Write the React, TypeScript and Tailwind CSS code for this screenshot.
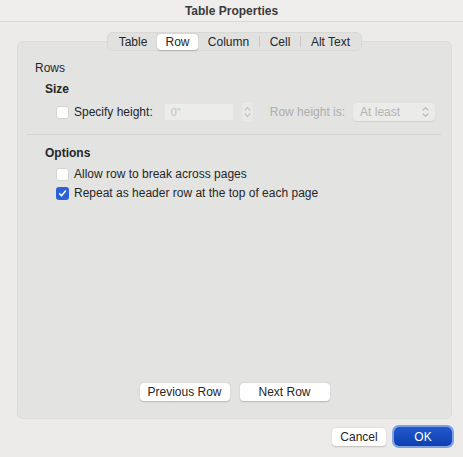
import React from 'react';

const tabs = [
  { label: 'Table', w: 'w-[48px]' },
  { label: 'Row', w: 'w-[41px]' },
  { label: 'Column', w: 'w-[61px]' },
  { label: 'Cell', w: 'w-[40px]' },
  { label: 'Alt Text', w: 'w-[59px]' },
];

const Checkbox = ({ checked }: { checked?: boolean }) =>
  checked ? (
    <span className="w-[13px] h-[13px] rounded-[3px] bg-[#2c62d6] flex items-center justify-center shrink-0">
      <svg width="9" height="9" viewBox="0 0 10 10" fill="none">
        <path d="M1.8 5.3 L4 7.6 L8.3 2.2" stroke="white" strokeWidth="1.7" strokeLinecap="round" strokeLinejoin="round" />
      </svg>
    </span>
  ) : (
    <span className="w-[13px] h-[13px] rounded-[3px] bg-white border border-[#d4d4d3] shrink-0" />
  );

const UpDown = ({ color = '#b9b9b9' }: { color?: string }) => (
  <svg width="7" height="12" viewBox="0 0 7 12" fill="none">
    <path d="M1 4.2 L3.5 1.6 L6 4.2" stroke={color} strokeWidth="1.1" strokeLinecap="round" strokeLinejoin="round" />
    <path d="M1 7.8 L3.5 10.4 L6 7.8" stroke={color} strokeWidth="1.1" strokeLinecap="round" strokeLinejoin="round" />
  </svg>
);

export default function App() {
  return (
    <div className="w-[463px] h-[457px] bg-[#ecebea] flex flex-col font-['Liberation_Sans',Arial,sans-serif] text-[12px] text-[#262626] whitespace-nowrap overflow-hidden">
      {/* title bar */}
      <div className="h-[22px] shrink-0 flex items-center justify-center font-bold text-[12px] text-[#3a3a3a] border-b border-[#d6d6d5] bg-[#efeeed]">
        Table Properties
      </div>

      <div className="flex-1 flex flex-col pl-[17px] pr-[11px] pt-[10px]">
        {/* segmented tabs */}
        <div className="flex justify-center relative z-10">
          <div className="h-[19px] flex items-center px-[1px] rounded-[6px] bg-[#e1e1e0] border border-[#d8d8d7]">
            {tabs.map((t, i) => (
              <React.Fragment key={t.label}>
                {i > 2 && <span className="w-px h-[11px] bg-[#cacac9]" />}
                <div
                  className={`${t.w} h-[16px] flex items-center justify-center rounded-[4px] ${
                    t.label === 'Row' ? 'bg-white shadow-[0_0.5px_1.5px_rgba(0,0,0,0.2)]' : ''
                  }`}
                >
                  {t.label}
                </div>
              </React.Fragment>
            ))}
          </div>
        </div>

        {/* group panel */}
        <div className="-mt-[10px] h-[378px] flex flex-col bg-[#e3e3e2] rounded-[6px] border border-[#dcdcdb] pt-[17px] pb-[17px]">
          <div className="h-[18px] flex items-center pl-[17px]">Rows</div>
          <div className="h-[18px] mt-[3px] flex items-center pl-[27px] font-bold">Size</div>

          <div className="h-[20px] mt-[4px] flex items-center pl-[38px]">
            <Checkbox />
            <span className="ml-[5px]">Specify height:</span>
            <div className="ml-[12px] w-[68px] h-[16px] bg-[#ececeb] flex items-center pl-[6px] text-[#c4c4c4] text-[11px]">
              0"
            </div>
            <div className="ml-[9px] w-[11px] h-[18px] rounded-[3px] bg-[#e9e9e8] flex items-center justify-center">
              <UpDown color="#bdbdbd" />
            </div>
            <span className="ml-[17px] text-[#adadad]">Row height is:</span>
            <div className="ml-[8px] w-[82px] h-[18px] rounded-[4px] bg-[#ebebea] shadow-[0_0.5px_1px_rgba(0,0,0,0.08)] flex items-center justify-between pl-[7px] pr-[6px] text-[#b3b3b3]">
              <span>At least</span>
              <UpDown color="#b5b5b5" />
            </div>
          </div>

          <div className="mt-[12px] ml-[9px] mr-[10px] h-px bg-[#d3d3d2]" />

          <div className="h-[18px] mt-[9px] flex items-center pl-[27px] font-bold">Options</div>
          <div className="h-[18px] mt-[3px] flex items-center pl-[38px]">
            <Checkbox />
            <span className="ml-[5px]">Allow row to break across pages</span>
          </div>
          <div className="h-[18px] mt-[1px] flex items-center pl-[38px]">
            <Checkbox checked />
            <span className="ml-[5px]">Repeat as header row at the top of each page</span>
          </div>

          <div className="flex-1" />

          <div className="flex justify-center gap-[10px]">
            <button className="w-[90px] h-[18px] rounded-[4px] bg-white shadow-[0_0.5px_1.5px_rgba(0,0,0,0.2)] flex items-center justify-center">
              Previous Row
            </button>
            <button className="w-[90px] h-[18px] rounded-[4px] bg-white shadow-[0_0.5px_1.5px_rgba(0,0,0,0.2)] flex items-center justify-center">
              Next Row
            </button>
          </div>
        </div>

        {/* dialog buttons */}
        <div className="flex justify-end items-center gap-[8px] mt-[8px]">
          <button className="w-[54px] h-[18px] rounded-[4px] bg-white shadow-[0_0.5px_1.5px_rgba(0,0,0,0.2)] flex items-center justify-center">
            Cancel
          </button>
          <button className="w-[58px] h-[19px] rounded-[5px] bg-gradient-to-b from-[#2159cf] to-[#0e3fae] text-white ring-[2px] ring-[#7ea1e6] flex items-center justify-center">
            OK
          </button>
        </div>
      </div>
    </div>
  );
}
